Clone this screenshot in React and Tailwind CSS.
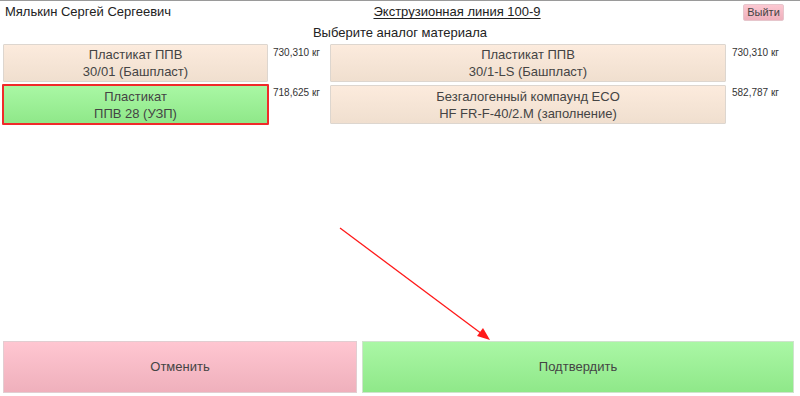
import React from "react";

const beige = "bg-gradient-to-b from-[#fcebdd] to-[#f0dfcf] border border-[#ddd6cf]";

function Mat({ lines, selected, className }) {
  return (
    <div
      className={
        "flex flex-col items-center justify-center text-[13px] leading-[17px] text-[#444] rounded-[1px] " +
        (selected
          ? "bg-gradient-to-b from-[#a9f7a4] to-[#8fe889] border-2 border-[#f02a2a] "
          : beige + " ") +
        className
      }
    >
      {lines.map((l, i) => (
        <span key={i}>{l}</span>
      ))}
    </div>
  );
}

export default function App() {
  return (
    <div
      className="relative w-[800px] h-[396px] bg-white overflow-hidden flex flex-col border-t border-[#9a9a9a]"
      style={{ fontFamily: '"Liberation Sans", Arial, sans-serif' }}
    >
      <div className="flex items-center h-[22px] pl-[5px] pr-[16px]">
        <span className="text-[13px] text-[#222] whitespace-nowrap shrink-0">Мялькин Сергей Сергеевич</span>
        <span className="flex-1 text-center text-[13px] text-[#222] underline underline-offset-2 whitespace-nowrap">
          Экструзионная линия 100-9
        </span>
        <div className="w-[41px] h-[17px] shrink-0 flex items-center justify-center text-[11px] text-[#444] bg-gradient-to-b from-[#fcc8d2] to-[#eeb0bc] border border-[#e6c6cc] rounded-[2px]">
          Выйти
        </div>
      </div>
      <div className="text-center text-[13px] text-[#222] h-[20px] leading-[20px]">
        Выберите аналог материала
      </div>
      <div className="flex flex-col gap-[3px] pl-[3px] pt-[1px]">
        <div className="flex">
          <Mat lines={["Пластикат ППВ", "30/01 (Башпласт)"]} className="w-[265px] h-[38px]" />
          <span className="w-[62px] pl-[5px] text-[10px] text-[#333] pt-[1px]">730,310 кг</span>
          <Mat lines={["Пластикат ППВ", "30/1-LS (Башпласт)"]} className="w-[396px] h-[38px]" />
          <span className="pl-[6px] text-[10px] text-[#333] pt-[1px]">730,310 кг</span>
        </div>
        <div className="flex">
          <Mat selected lines={["Пластикат", "ППВ 28 (УЗП)"]} className="w-[267px] h-[41px] -ml-[1px] -mt-[1px]" />
          <span className="w-[61px] pl-[4px] text-[10px] text-[#333]">718,625 кг</span>
          <Mat lines={["Безгалогенный компаунд ECO", "HF FR-F-40/2.M (заполнение)"]} className="w-[396px] h-[39px]" />
          <span className="pl-[6px] text-[10px] text-[#333]">582,787 кг</span>
        </div>
      </div>
      <div className="flex-1" />
      <div className="flex gap-[5px] pl-[3px] pr-[6px] pb-[3px]">
        <div className="w-[354px] h-[52px] flex items-center justify-center text-[13px] text-[#444] bg-gradient-to-b from-[#ffc6d1] to-[#efb0bc] border border-[#e2cdd1]">
          Отменить
        </div>
        <div className="flex-1 h-[52px] flex items-center justify-center text-[13px] text-[#444] bg-gradient-to-b from-[#aaf7a5] to-[#8fe889] border border-[#cfe3cd]">
          Подтвердить
        </div>
      </div>
      <svg className="absolute left-0 top-0 pointer-events-none" width="800" height="396">
        <line x1="340" y1="227" x2="482" y2="333" stroke="#ff1a1a" strokeWidth="1.3" />
        <polygon points="490,339 477,335 483,327" fill="#ff1a1a" />
      </svg>
    </div>
  );
}
